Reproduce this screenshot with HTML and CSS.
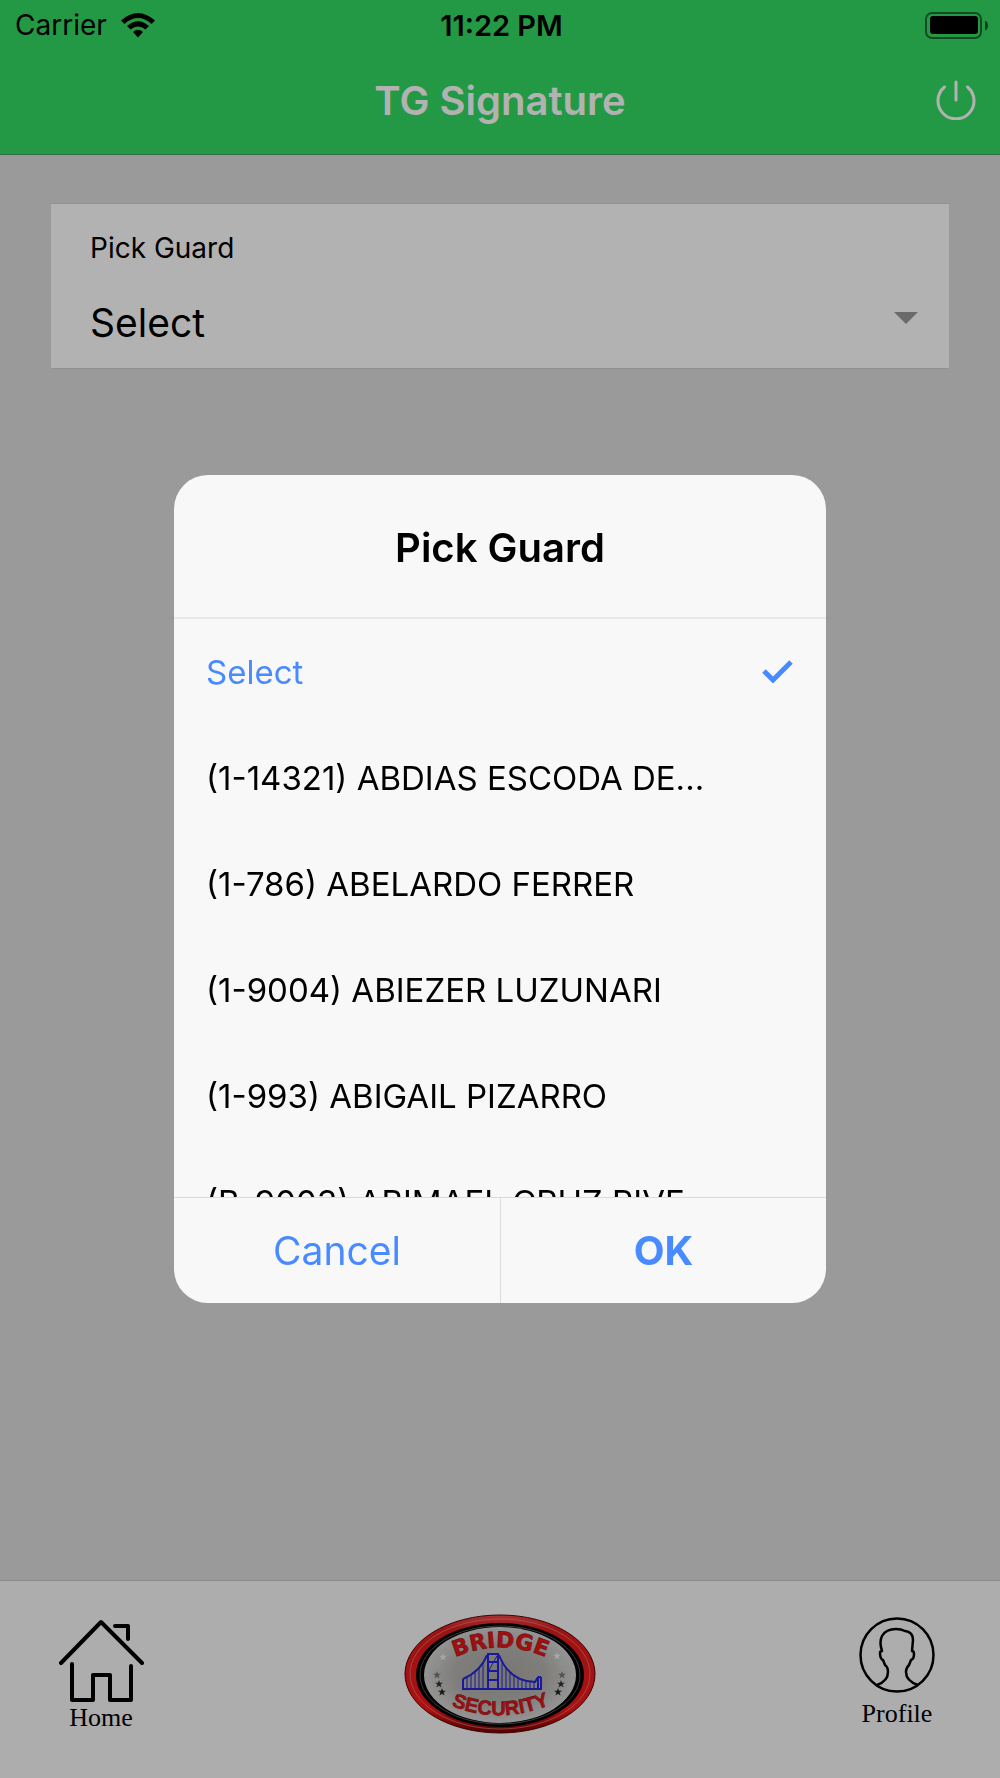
FILE: index.html
```html
<!DOCTYPE html>
<html lang="en">
<head>
  <meta charset="UTF-8">
  <meta name="viewport" content="width=device-width, initial-scale=1.0">
  <title>TG Signature</title>
  <link rel="stylesheet" href="styles.css">
</head>
<body>
  <div class="page">
    <header class="toolbar">
      <div class="status-bar">
        <div class="carrier">
          <span>Carrier</span>
          <svg width="34" height="25" viewBox="0 0 34 25">
            <path d="M0 7.500Q17-7.500 34 7.500L30.600 11Q17-.8 3.400 11Z"/>
            <path d="M6 13Q17 3.500 28 13L24.400 16.500Q17 10.500 9.600 16.500Z"/>
            <path d="M12 19Q17 14.500 22 19L17 24.500Z"/>
          </svg>
        </div>
        <span class="time">11:22 PM</span>
        <svg class="battery" width="63" height="27" viewBox="0 0 63 27">
          <rect x="1" y="1" width="55" height="25" rx="6" fill="none" stroke="#000" stroke-opacity=".5" stroke-width="2"/>
          <rect x="5" y="4" width="48" height="18" rx="3"/>
          <path d="M60 8.500q3 1.500 3 5t-3 5z" fill-opacity=".6"/>
        </svg>
      </div>
      <div class="title-bar">
        <h1>TG Signature</h1>
        <button class="logout" type="button" aria-label="Log out">
          <svg width="40" height="40" viewBox="0 0 40 40" fill="none" stroke="#fff" stroke-width="3" stroke-linecap="round">
            <path d="M20 2v18M8.500 7A18 18 0 1 0 31.500 7"/>
          </svg>
        </button>
      </div>
    </header>

    <main class="content">
      <div class="card">
        <label for="guard">Pick Guard</label>
        <div class="select-row">
          <select id="guard">
            <option>Select</option>
          </select>
          <span class="arrow"></span>
        </div>
      </div>
    </main>

    <footer class="tab-bar">
      <a class="tab tab-home" href="#home">
        <svg width="86" height="84" viewBox="0 0 86 84" fill="none" stroke="#000" stroke-width="4" stroke-linecap="round" stroke-linejoin="round">
          <path d="M3 44L43 3L84 44"/>
          <path d="M57 7H70V20"/>
          <path d="M14 45V81H35V56H52V81H73V47"/>
        </svg>
        <span>Home</span>
      </a>
      <a class="logo" href="#about" aria-label="Bridge Security">
        <svg width="192" height="120" viewBox="0 0 192 120">
          <defs>
            <linearGradient id="ring" x1="0" y1="0" x2="0" y2="1">
              <stop offset="0" stop-color="#f04848"/>
              <stop offset=".12" stop-color="#e01c1c"/>
              <stop offset=".8" stop-color="#f81818"/>
              <stop offset="1" stop-color="#700"/>
            </linearGradient>
            <radialGradient id="plate">
              <stop offset="0" stop-color="#aaa9a4"/>
              <stop offset=".6" stop-color="#b6b5b1"/>
              <stop offset="1" stop-color="#d4d4d4"/>
            </radialGradient>
            <path id="arc-top" d="M45 46Q96 21 148 46"/>
            <path id="arc-bottom" d="M43 90Q96 113 150 89"/>
          </defs>
          <ellipse cx="96" cy="60" rx="95" ry="59" fill="url(#ring)" stroke="#500"/>
          <ellipse cx="96" cy="60" rx="90" ry="55" fill="none" stroke="#d99" stroke-opacity=".6"/>
          <ellipse cx="96" cy="61" rx="84" ry="52" fill="#000"/>
          <ellipse cx="96" cy="61" rx="80" ry="49" fill="none" stroke="#555"/>
          <ellipse cx="96" cy="61" rx="76" ry="48" fill="url(#plate)"/>
          <g fill="none" stroke="#2525dd">
            <path stroke-width="2" d="M58 75H138M84 39V75M94 39V75M84 40H94M84 48H94M84 57H94M84 66H94M59 65Q77 57 83 41M95 41Q105 67 131 68L134 63M134 63V75M137 63V75M134 63H137M59 65V75"/>
            <path stroke-width="1" d="M63 63V75M67 61V75M71 58V75M75 54V75M79 49V75M98 49V75M102 54V75M106 58V75M110 62V75M114 64V75M118 66V75M122 67V75M126 68V75M130 68V75M85 56L93 42"/>
          </g>
          <g fill="#e8161c" stroke="#8c0909" stroke-width=".5">
            <text class="logo-top"><textPath href="#arc-top" startOffset="50%" text-anchor="middle">BRIDGE</textPath></text>
            <text class="logo-bottom"><textPath href="#arc-bottom" startOffset="50%" text-anchor="middle">SECURITY</textPath></text>
          </g>
          <!-- stars down both sides -->
          <defs>
            <path id="star" d="M0-4L1-1.200H4L1.600.6L2.500 3.500L0 1.700L-2.500 3.500L-1.600.6L-4-1.200H-1Z"/>
          </defs>
          <use href="#star" x="39" y="43" fill="#eee"/>
          <use href="#star" x="34" y="51" fill="#ccc"/>
          <use href="#star" x="33" y="61" fill="#777"/>
          <use href="#star" x="35" y="70" fill="#333"/>
          <use href="#star" x="38" y="78" fill="#222"/>
          <use href="#star" x="153" y="42" fill="#eee"/>
          <use href="#star" x="157" y="50" fill="#ccc"/>
          <use href="#star" x="158" y="61" fill="#777"/>
          <use href="#star" x="157" y="70" fill="#333"/>
          <use href="#star" x="154" y="78" fill="#222"/>
        </svg>
      </a>
      <a class="tab tab-profile" href="#profile">
        <svg width="76" height="76" viewBox="0 0 76 76" fill="none" stroke="#000" stroke-width="2.500" stroke-linejoin="round">
          <circle cx="38" cy="38" r="36.500"/>
          <path d="M18 68Q29 64 29 55Q29 50 26 48L24 43Q21 42 21 36Q21 34 23 34Q20 25 23 19Q27 12 37 12Q42 12 46 14Q54 15 54 23L53 34Q55 34 55 37Q55 42 52 43L50 48Q47 51 47 55Q47 64 59 68"/>
        </svg>
        <span>Profile</span>
      </a>
    </footer>
  </div>

  <!-- guard picker -->
  <div class="backdrop">
    <form class="alert" role="dialog" aria-labelledby="alert-title">
      <h2 id="alert-title">Pick Guard</h2>
      <div class="options">
        <label class="option">
          <input type="radio" name="guard" checked>
          <span>Select</span>
          <svg width="32" height="26" viewBox="0 0 32 26" fill="none" stroke="#488aff" stroke-width="5">
            <path d="M2 12L11 21L29 3"/>
          </svg>
        </label>
        <label class="option">
          <input type="radio" name="guard">
          <span>(1-14321) ABDIAS ESCODA DE...</span>
        </label>
        <label class="option">
          <input type="radio" name="guard">
          <span>(1-786) ABELARDO FERRER</span>
        </label>
        <label class="option">
          <input type="radio" name="guard">
          <span>(1-9004) ABIEZER LUZUNARI</span>
        </label>
        <label class="option">
          <input type="radio" name="guard">
          <span>(1-993) ABIGAIL PIZARRO</span>
        </label>
        <label class="option">
          <input type="radio" name="guard">
          <span>(B-9003) ABIMAEL CRUZ RIVE...</span>
        </label>
      </div>
      <div class="buttons">
        <button type="button">Cancel</button>
        <button type="button" class="ok">OK</button>
      </div>
    </form>
  </div>
</body>
</html>
```

FILE: styles.css
```css
* { box-sizing: border-box; }
body {
  margin: 0;
  font-family: Inter, Roboto, sans-serif;
  color: #000;
}
button {
  border: 0;
  padding: 0;
  background: none;
  font-family: inherit;
  cursor: pointer;
}
svg { display: block; }
.page {
  display: flex;
  flex-direction: column;
  min-height: 100vh;
  background: #ddd;
}

/* toolbar */
.toolbar {
  background: #34dc64;
  border-bottom: 1px solid #4a9c60;
}
.status-bar {
  display: grid;
  grid-template-columns: 1fr auto 1fr;
  align-items: center;
  height: 50px;
  padding: 0 12px 0 15px;
  font-size: 28px;
}
.carrier {
  display: flex;
  align-items: center;
  gap: 14px;
}
.time {
  font-size: 29px;
  font-weight: 600;
}
.battery { justify-self: end; }
.title-bar {
  display: grid;
  grid-template-columns: 1fr auto 1fr;
  align-items: center;
  height: 104px;
  padding: 0 24px 4px;
}
.title-bar h1 {
  grid-column: 2;
  margin: 0;
  color: #fff;
  font-size: 40px;
  font-weight: 600;
}
.logout { justify-self: end; }

/* card */
.content {
  flex: 1;
  padding: 48px 51px;
}
.card {
  padding: 24px 31px 16px 39px;
  background: #fff;
  border-top: 1px solid #d0d0d0;
  border-bottom: 1px solid #d0d0d0;
}
.card label {
  display: block;
  font-size: 28px;
  line-height: 40px;
}
.select-row {
  display: flex;
  align-items: center;
  margin-top: 24px;
}
.select-row select {
  flex: 1;
  height: 60px;
  padding: 0;
  border: 0;
  background: none;
  appearance: none;
  color: #000;
  font-family: inherit;
  font-size: 39px;
}
.arrow {
  margin-bottom: 8px;
  border: 12px solid transparent;
  border-top-color: #999;
  border-bottom: 0;
}

/* tab bar */
.tab-bar {
  display: grid;
  grid-template-columns: 1fr auto 1fr;
  align-items: start;
  height: 198px;
  padding-top: 33px;
  background: #f8f8f8;
  border-top: 1px solid #c6c6c6;
}
.tab {
  display: flex;
  flex-direction: column;
  align-items: center;
  color: #000;
  font-family: "Liberation Serif", serif;
  font-size: 26px;
  line-height: 30px;
  text-decoration: none;
}
.tab-home {
  justify-self: start;
  padding: 5px 0 0 58px;
}
.tab-profile {
  justify-self: end;
  padding: 3px 65px 0 0;
}
.tab-profile span { margin-top: 6px; }
.logo-top { font: bold 22px "DejaVu Sans", sans-serif; }
.logo-bottom { font: bold 20px "Liberation Sans", sans-serif; }

/* picker dialog */
.backdrop {
  position: fixed;
  inset: 0;
  display: flex;
  align-items: center;
  justify-content: center;
  background: rgba(0, 0, 0, 0.3);
}
.alert {
  width: 652px;
  max-width: 90%;
  overflow: hidden;
  border-radius: 34px;
  background: #f8f8f8;
}
.alert h2 {
  margin: 0;
  padding: 50px 0 46px;
  font-size: 40px;
  font-weight: 600;
  line-height: 46px;
  text-align: center;
}
.options {
  height: 580px;
  overflow-y: auto;
  scrollbar-width: none;
  border-top: 2px solid #e8e8e8;
}
.option {
  display: flex;
  align-items: center;
  justify-content: space-between;
  height: 106px;
  padding: 0 32px;
  font-size: 33px;
  white-space: nowrap;
}
.option input {
  position: absolute;
  opacity: 0;
}
.option input:checked + span { color: #488aff; }
.buttons {
  display: grid;
  grid-template-columns: 1fr 1fr;
  border-top: 1px solid #dbdbdf;
}
.buttons button {
  height: 105px;
  color: #488aff;
  font-size: 39px;
}
.buttons button + button { border-left: 1px solid #dbdbdf; }
.buttons .ok {
  font-size: 40px;
  font-weight: 700;
}
```
